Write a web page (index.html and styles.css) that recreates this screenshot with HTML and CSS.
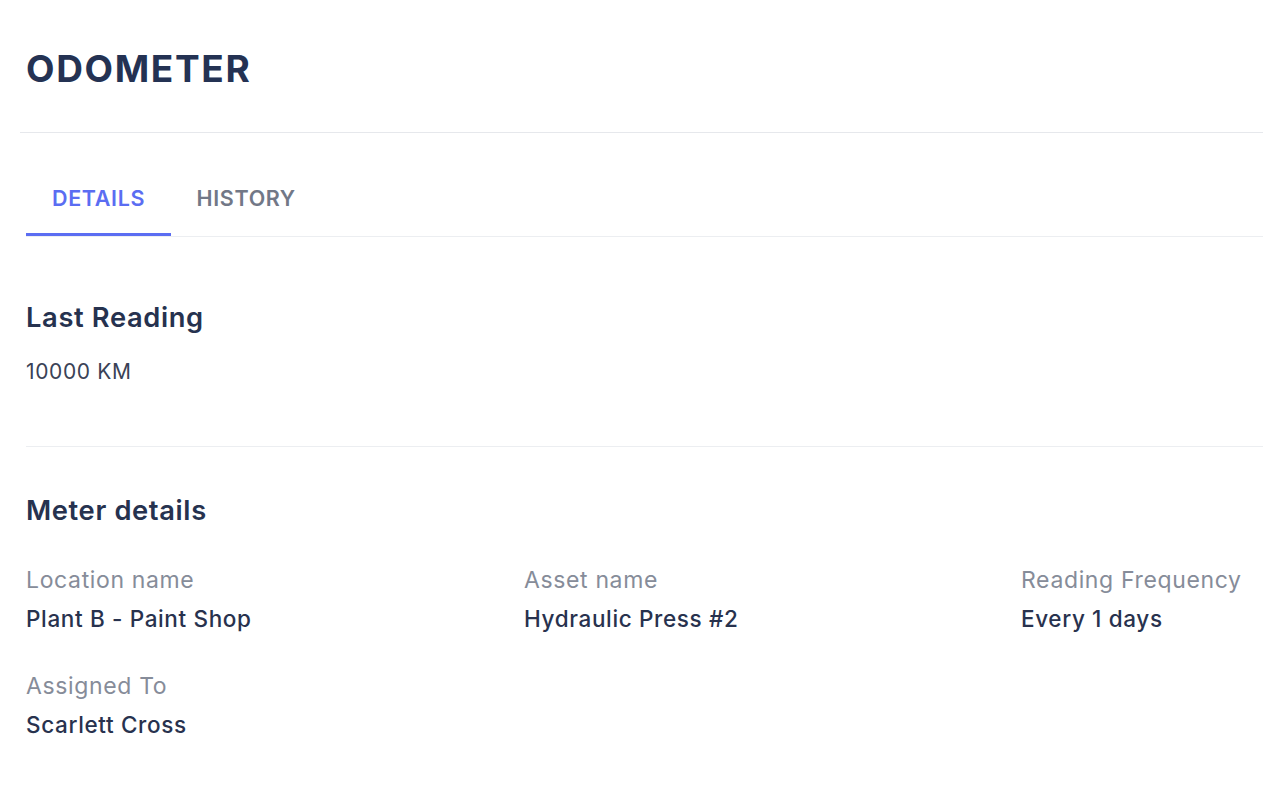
FILE: index.html
```html
<!DOCTYPE html>
<html lang="en">
<head>
<meta charset="utf-8">
<title>Odometer</title>
<link rel="stylesheet" href="styles.css">
</head>
<body>
<div class="page">
  <header class="header">
    <h1 class="title">ODOMETER</h1>
  </header>
  <div class="content">
    <nav class="tabs">
      <a class="tab active">DETAILS</a>
      <a class="tab">HISTORY</a>
    </nav>
    <section class="section first">
      <h2 class="section-title">Last Reading</h2>
      <p class="reading">10000 KM</p>
    </section>
    <section class="section second">
      <h2 class="section-title">Meter details</h2>
      <div class="fields">
        <div class="field">
          <div class="label">Location name</div>
          <div class="value">Plant B - Paint Shop</div>
        </div>
        <div class="field">
          <div class="label">Asset name</div>
          <div class="value">Hydraulic Press #2</div>
        </div>
        <div class="field">
          <div class="label">Reading Frequency</div>
          <div class="value">Every 1 days</div>
        </div>
        <div class="field">
          <div class="label">Assigned To</div>
          <div class="value">Scarlett Cross</div>
        </div>
      </div>
    </section>
  </div>
</div>
</body>
</html>
```

FILE: styles.css
```css
* { box-sizing: border-box; }
html, body { margin: 0; padding: 0; background: #ffffff; }
body {
  font-family: Inter, "Noto Sans", sans-serif;
  color: #25314f;
  letter-spacing: 0.04em;
}
.page {
  padding: 0 17px 0 20px;
}
.header {
  padding: 47px 0 41px 6px;
  border-bottom: 1px solid #e6e8ec;
}
.title {
  margin: 0;
  font-size: 37px;
  line-height: 44px;
  font-weight: 700;
  color: #243253;
  letter-spacing: 0.045em;
}
.content {
  padding-left: 6px;
}
.tabs {
  display: flex;
  margin-top: 28px;
  border-bottom: 1px solid #eceef1;
}
.tab {
  padding: 24px 25.5px 22px 26px;
  font-size: 21.5px;
  line-height: 26px;
  font-weight: 600;
  color: #727887;
  border-bottom: 3px solid transparent;
}
.tab.active {
  color: #5b6df2;
  border-bottom-color: #5b6df2;
}
.section-title {
  margin: 0;
  font-size: 27.3px;
  line-height: 32px;
  font-weight: 600;
  color: #26324f;
}
.section.first {
  padding-top: 65px;
  padding-bottom: 60px;
  border-bottom: 1px solid #eceef1;
}
.reading {
  margin: 24px 0 0;
  font-size: 21px;
  line-height: 28px;
  color: #3a4256;
}
.section.second {
  padding-top: 48px;
}
.fields {
  margin-top: 38px;
  display: grid;
  grid-template-columns: 498px 497px 1fr;
  row-gap: 37px;
}
.label {
  font-size: 23px;
  line-height: 30px;
  color: #868c99;
}
.value {
  margin-top: 9px;
  font-size: 22.5px;
  line-height: 30px;
  font-weight: 500;
  color: #28324e;
}
```
